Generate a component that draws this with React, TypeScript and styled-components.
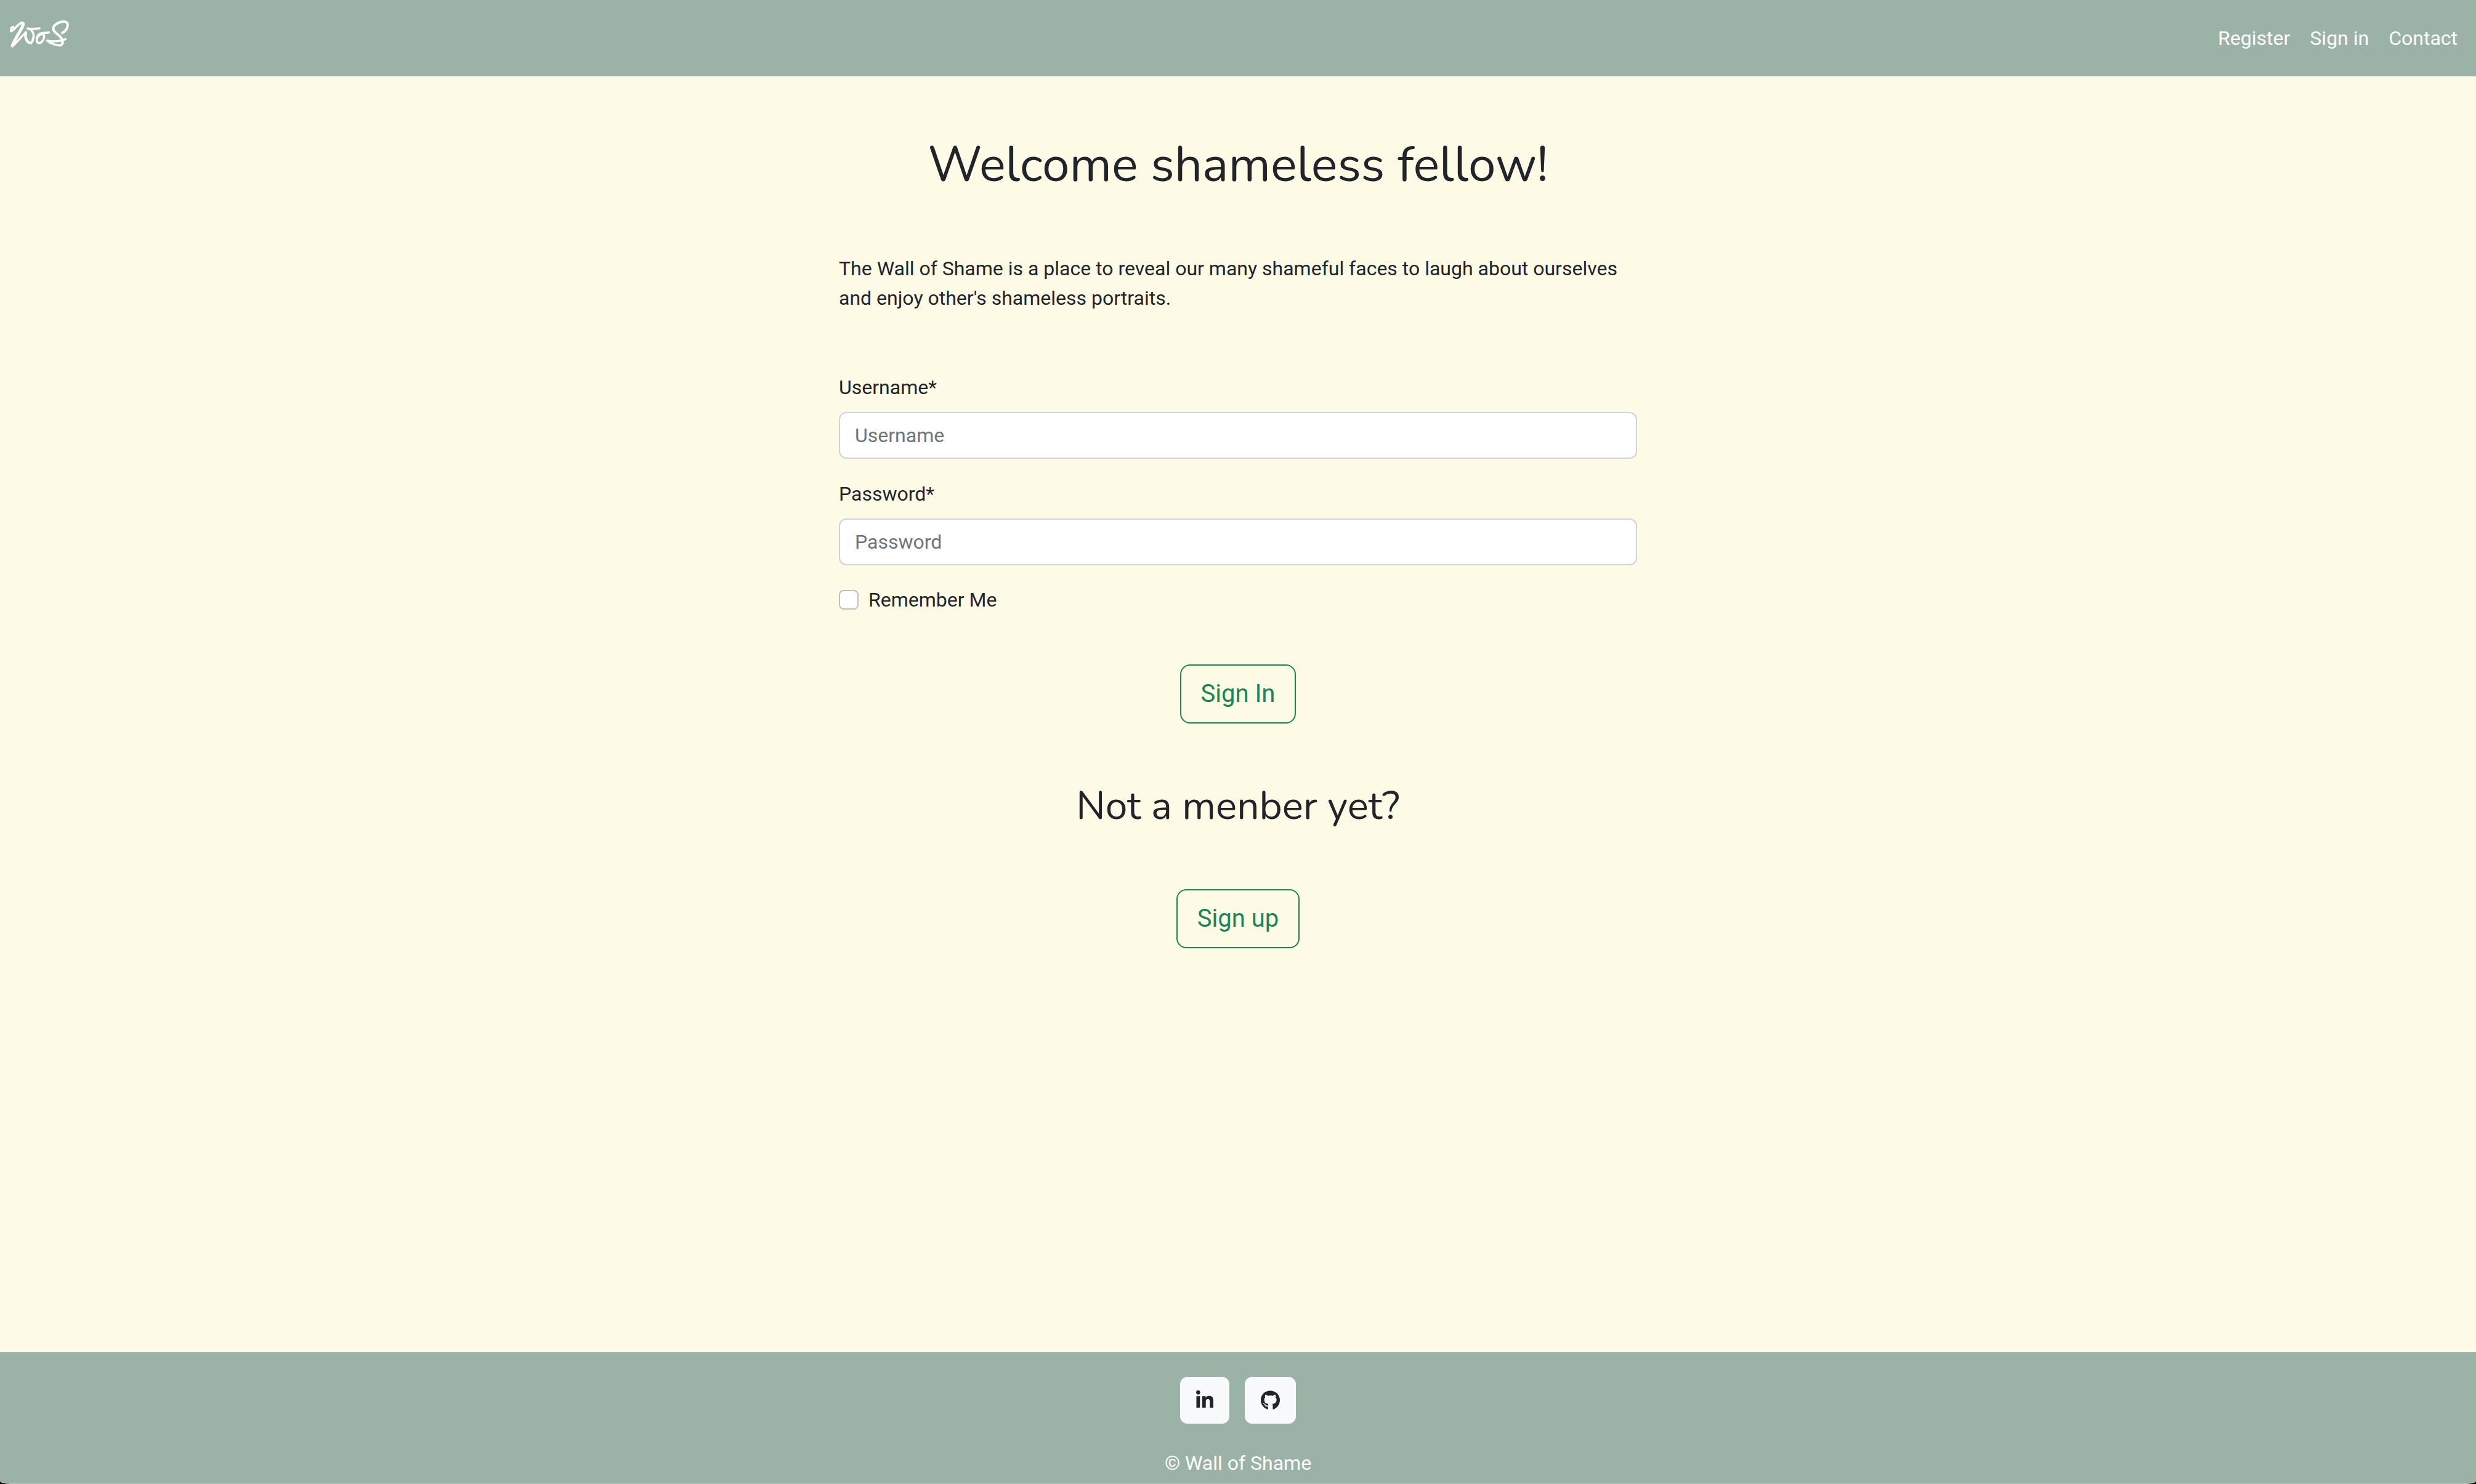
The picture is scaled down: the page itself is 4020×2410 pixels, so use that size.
import React from "react";
import styled, { createGlobalStyle } from "styled-components";
import { FaGithub, FaLinkedinIn } from "react-icons/fa";

const sage = "#9bb2a6";
const cream = "#fdfae6";
const ink = "#212529";
const green = "#198754";

const GlobalStyle = createGlobalStyle`
  *, *::before, *::after { box-sizing: border-box; }
  html { background: #0c0608; }
  body {
    margin: 0;
    color: ${ink};
    font-family: Roboto, "Liberation Sans", sans-serif;
    font-size: 32px;
    line-height: 48px;
  }
  h1, h2, p { margin: 0; }
`;

const Page = styled.div`
  display: flex;
  flex-direction: column;
  min-height: 100vh;
`;

const Header = styled.header`
  display: flex;
  align-items: center;
  justify-content: space-between;
  padding: 31px 30px 31px 16px;
  background: ${sage};
`;

const Brand = styled.a`
  display: block;
  height: 62px;
`;

const Nav = styled.nav`
  display: flex;
  gap: 32px;
`;

const NavLink = styled.a`
  color: #fff;
  text-decoration: none;
`;

const Main = styled.main`
  flex: 1;
  display: flex;
  flex-direction: column;
  align-items: center;
  gap: 96px;
  padding: 96px 24px;
  background: ${cream};
`;

const Title = styled.h1`
  font: 400 80px/96px Nunito, "Open Sans", sans-serif;
  text-align: center;
`;

const Subtitle = styled.h2`
  font: 400 64px/77px Nunito, "Open Sans", sans-serif;
  text-align: center;
`;

const Intro = styled.p`
  width: 100%;
  max-width: 1296px;
`;

const Form = styled.form`
  display: flex;
  flex-direction: column;
  gap: 32px;
  width: 100%;
  max-width: 1296px;
`;

const Field = styled.div`
  display: flex;
  flex-direction: column;
  gap: 16px;
`;

const FieldLabel = styled.label`
  padding-top: 1px;
`;

const TextInput = styled.input`
  width: 100%;
  height: 76px;
  padding: 12px 24px;
  border: 2px solid #ced4da;
  border-radius: 12px;
  background: #fff;
  color: ${ink};
  font: inherit;
  &::placeholder { color: #6c757d; opacity: 1; }
`;

const CheckRow = styled.label`
  display: flex;
  align-items: center;
  gap: 16px;
`;

const Checkbox = styled.input`
  appearance: none;
  width: 32px;
  height: 32px;
  margin: 0;
  border: 2px solid #bfbfbf;
  border-radius: 8px;
  background: #fff;
  &:checked { background: ${green}; }
`;

const OutlineButton = styled.button`
  padding: 16px 32px;
  border: 2px solid ${green};
  border-radius: 16px;
  background: transparent;
  color: ${green};
  font: 400 40px/60px Roboto, "Liberation Sans", sans-serif;
`;

const SubmitButton = styled(OutlineButton)`
  align-self: center;
  margin-top: 49px;
`;

const Footer = styled.footer`
  display: flex;
  flex-direction: column;
  align-items: center;
  gap: 40px;
  padding: 40px 24px 8px;
  border-bottom: 2px solid #afc1b7;
  border-radius: 0 0 16px 16px / 0 0 5px 5px;
  background: ${sage};
  color: #fff;
`;

const Socials = styled.div`
  display: flex;
  gap: 25px;
`;

const SocialLink = styled.a<{ $iconWidth: number }>`
  display: flex;
  align-items: center;
  height: 76px;
  padding: 0 26px;
  border-radius: 12px;
  background: #f8f9fa;
  color: ${ink};
  svg { width: ${(p) => p.$iconWidth}px; height: 32px; }
`;

function Logo() {
  return (
    <svg width="98" height="50" viewBox="48 93 294 150" fill="none" stroke="#fff" strokeLinecap="round" strokeLinejoin="round" role="img" aria-label="WoS">
      <path strokeWidth="11" d="M54 152 C51 140 58 132 64 131 M57 151 C70 144 88 116 106 111" />
      <path strokeWidth="15" d="M107 112 C117 112 113 124 104 140 C90 166 70 195 60 223" />
      <path strokeWidth="10" d="M60 225 C80 212 104 176 126 158" />
      <path strokeWidth="13" d="M126 158 C120 182 130 208 150 210" />
      <path strokeWidth="11" d="M150 210 C162 200 169 172 158 154 C150 141 142 139 135 139 C152 144 172 140 192 138" />
      <path strokeWidth="11" d="M196 164 C178 172 174 206 188 210 C204 212 220 184 213 170 C206 162 190 168 186 178 M196 164 C206 158 222 162 238 158" />
      <path strokeWidth="12" d="M304 160 C322 152 334 128 328 113 C318 98 282 106 264 126 C250 146 270 158 286 172 C306 188 310 206 300 217" />
      <path strokeWidth="11" d="M300 219 C284 226 250 214 230 198 C256 204 300 200 319 191" />
    </svg>
  );
}

export default function App() {
  return (
    <>
      <GlobalStyle />
      <Page>
        <Header>
          <Brand href="#"><Logo /></Brand>
          <Nav>
            <NavLink href="#register">Register</NavLink>
            <NavLink href="#signin">Sign in</NavLink>
            <NavLink href="#contact">Contact</NavLink>
          </Nav>
        </Header>
        <Main>
          <Title>Welcome shameless fellow!</Title>
          <Intro>
            The Wall of Shame is a place to reveal our many shameful faces to laugh about ourselves and enjoy other's shameless portraits.
          </Intro>
          <Form onSubmit={(e) => e.preventDefault()}>
            <Field>
              <FieldLabel htmlFor="username">Username*</FieldLabel>
              <TextInput id="username" type="text" placeholder="Username" />
            </Field>
            <Field>
              <FieldLabel htmlFor="password">Password*</FieldLabel>
              <TextInput id="password" type="password" placeholder="Password" />
            </Field>
            <CheckRow htmlFor="remember">
              <Checkbox id="remember" type="checkbox" />
              Remember Me
            </CheckRow>
            <SubmitButton type="submit">Sign In</SubmitButton>
          </Form>
          <Subtitle>Not a menber yet?</Subtitle>
          <OutlineButton type="button">Sign up</OutlineButton>
        </Main>
        <Footer>
          <Socials>
            <SocialLink href="#linkedin" aria-label="LinkedIn" $iconWidth={28}><FaLinkedinIn /></SocialLink>
            <SocialLink href="#github" aria-label="GitHub" $iconWidth={31}><FaGithub /></SocialLink>
          </Socials>
          <p>© Wall of Shame</p>
        </Footer>
      </Page>
    </>
  );
}
